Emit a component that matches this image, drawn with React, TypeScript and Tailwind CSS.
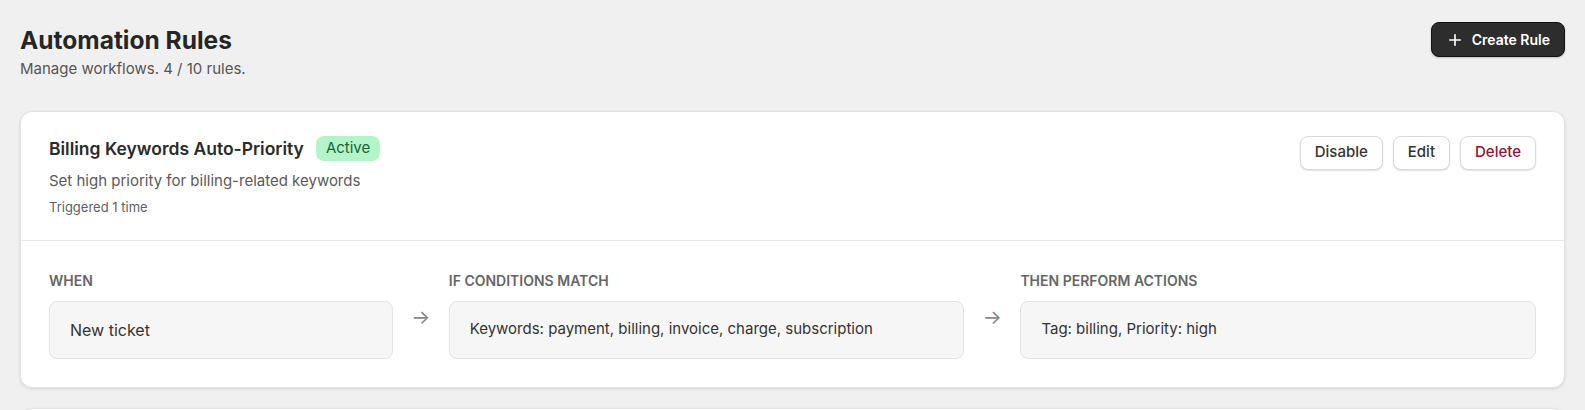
import { Plus } from "lucide-react";

type Rule = {
  name: string;
  active: boolean;
  description: string;
  triggered: number;
  trigger: string;
  conditions: string;
  actions: string;
};

const rules: Rule[] = [
  {
    name: "Billing Keywords Auto-Priority",
    active: true,
    description: "Set high priority for billing-related keywords",
    triggered: 1,
    trigger: "New ticket",
    conditions: "Keywords: payment, billing, invoice, charge, subscription",
    actions: "Tag: billing, Priority: high",
  },
  {
    name: "Urgent Escalation",
    active: true,
    description: "Escalate tickets that mention outages",
    triggered: 0,
    trigger: "New ticket",
    conditions: "Keywords: outage, down, urgent",
    actions: "Priority: urgent",
  },
];

function RuleCard({ rule }: { rule: Rule }) {
  return (
    <div className="bg-white border border-[#e3e3e3] rounded-xl shadow-[0_1px_3px_rgba(0,0,0,0.12)]">
      {/* Header */}
      <div className="flex items-start justify-between px-7 pt-6 pb-[22px] border-b border-[#e8e8e8]">
        <div>
          <div className="flex items-center gap-3">
            <h2 className="text-[17.5px] font-semibold text-[#2a2a2a]">{rule.name}</h2>
            {rule.active && (
              <span className="px-2.5 h-[25px] flex items-center rounded-lg bg-[#b3f5c9] text-[#166534] text-[15px]">
                Active
              </span>
            )}
          </div>
          <p className="mt-2 text-[15px] text-[#5a5a5a]">{rule.description}</p>
          <p className="mt-[6px] text-[13px] text-[#5f5f5f]">
            Triggered {rule.triggered} {rule.triggered === 1 ? "time" : "times"}
          </p>
        </div>
        <div className="flex items-center gap-2.5">
          <button className="px-3.5 h-[34px] text-[15px] font-medium text-[#333] bg-white border border-[#dadada] rounded-lg shadow-[0_1px_2px_rgba(0,0,0,0.12)]">
            Disable
          </button>
          <button className="px-3.5 h-[34px] text-[15px] font-medium text-[#333] bg-white border border-[#dadada] rounded-lg shadow-[0_1px_2px_rgba(0,0,0,0.12)]">
            Edit
          </button>
          <button className="px-3.5 h-[34px] text-[15px] font-medium text-[#8f1336] bg-white border border-[#dadada] rounded-lg shadow-[0_1px_2px_rgba(0,0,0,0.12)]">
            Delete
          </button>
        </div>
      </div>

      {/* Flow */}
      <div className="px-7 pt-[30px] pb-7 grid grid-cols-[2fr_auto_3fr_auto_3fr] gap-x-5">
        <div className="text-sm font-semibold text-[#666] uppercase">When</div>
        <div />
        <div className="text-sm font-semibold text-[#666] uppercase">If conditions match</div>
        <div />
        <div className="text-sm font-semibold text-[#666] uppercase">Then perform actions</div>

        <div className="mt-2.5 px-5 py-4 bg-[#f6f6f6] border border-[#e3e3e3] rounded-lg text-base text-[#333]">
          {rule.trigger}
        </div>
        <div className="mt-2.5 w-4 pt-1 flex justify-center text-xl leading-6 text-[#888]">→</div>
        <div className="mt-2.5 px-5 py-4 bg-[#f6f6f6] border border-[#e3e3e3] rounded-lg text-[15px] text-[#333]">
          {rule.conditions}
        </div>
        <div className="mt-2.5 w-4 pt-1 flex justify-center text-xl leading-6 text-[#888]">→</div>
        <div className="mt-2.5 px-5 py-4 bg-[#f6f6f6] border border-[#e3e3e3] rounded-lg text-[15px] text-[#333]">
          {rule.actions}
        </div>
      </div>
    </div>
  );
}

export default function App() {
  return (
    <div className="min-h-screen bg-[#f0f0f0] px-5 pt-[22px] pb-10 font-['Inter','Noto_Sans',sans-serif]">
      <div className="flex items-start justify-between">
        <div className="pt-0.5">
          <h1 className="text-[24.5px] leading-8 font-bold text-[#262626]">Automation Rules</h1>
          <p className="mt-0.5 text-[15px] text-[#555]">Manage workflows. 4 / 10 rules.</p>
        </div>
        <button className="flex items-center gap-2 px-3.5 h-[35px] bg-[#2d2d2d] border border-[#111] rounded-lg text-white text-sm font-semibold shadow-[0_1px_2px_rgba(0,0,0,0.2)]">
          <Plus size={18} strokeWidth={2.2} />
          Create Rule
        </button>
      </div>

      <div className="mt-[30px] flex flex-col gap-5">
        {rules.map((rule) => (
          <RuleCard key={rule.name} rule={rule} />
        ))}
      </div>
    </div>
  );
}
